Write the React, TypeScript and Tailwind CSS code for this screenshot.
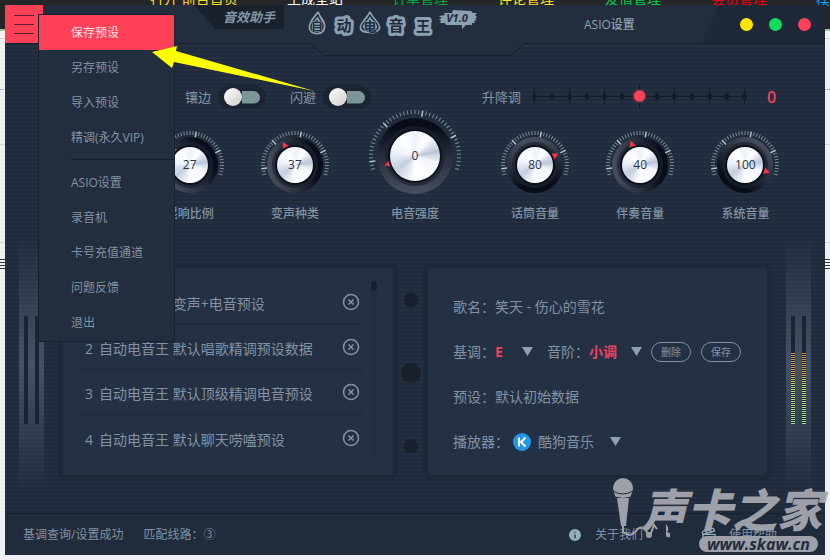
import { useState } from "react";
import { Info, Clapperboard } from "lucide-react";

const siteLinks = [
  { name: "打开 前台首页", className: "left-[150px] text-yellow-300" },
  { name: "生成全站", className: "left-[287px] text-white" },
  { name: "订单管理", className: "left-[392px] text-green-600" },
  { name: "评论管理", className: "left-[498px] text-yellow-300" },
  { name: "友情管理", className: "left-[605px] text-green-500" },
  { name: "会员管理", className: "left-[711px] text-red-600" },
  { name: "模", className: "left-[816px] text-sky-500" },
];

const fileItems = ["保存预设", "另存预设", "导入预设", "精调(永久VIP)"];
const toolItems = ["ASIO设置", "录音机", "卡号充值通道", "问题反馈", "退出"];

const knobs = [
  { label: "混响比例", value: 27 },
  { label: "变声种类", value: 37 },
  { label: "电音强度", value: 0, large: true },
  { label: "话筒音量", value: 80 },
  { label: "伴奏音量", value: 40 },
  { label: "系统音量", value: 100 },
];

const presets = [
  "自动电音王 变声+电音预设",
  "自动电音王 默认唱歌精调预设数据",
  "自动电音王 默认顶级精调电音预设",
  "自动电音王 默认聊天唠嗑预设",
];

function SiteBackground() {
  return (
    <div className="absolute inset-0 overflow-hidden">
      <div className="h-[31px] border-b-2 border-[#9dc79d] bg-[#242628]" />
      <div className="h-2 border-b border-gray-300 bg-[#f1f5ee]" />
      <nav>
        {siteLinks.map((link) => (
          <a
            key={link.name}
            href="#"
            className={`absolute -top-[9px] text-sm leading-4 whitespace-nowrap ${link.className}`}
          >
            {link.name}
          </a>
        ))}
      </nav>
      <div className="absolute top-[89px] w-full border-t border-dotted border-gray-400" />
      <div className="absolute top-[144px] w-full border-t border-gray-300" />
      <div className="absolute top-[242px] w-full border-t border-gray-300" />
      <div className="absolute top-[259px] h-[10px] w-full bg-[repeating-linear-gradient(#333_0_1px,#eef0f4_1px_3px)]" />
    </div>
  );
}

function Logo() {
  const letters = [
    { char: "自", x: 13, y: 26, size: 12 },
    { char: "动", x: 40, y: 26, size: 15 },
    { char: "电", x: 66, y: 26, size: 13 },
    { char: "音", x: 92, y: 26, size: 15 },
    { char: "王", x: 119, y: 26, size: 14 },
  ];
  return (
    <svg width="176" height="38" viewBox="0 0 176 38" className="shrink-0 font-bold">
      <g fill="#8ba0b0" stroke="#8ba0b0" strokeWidth="3" strokeLinejoin="round">
        <path d="M14 8C10 13 6 17 6 22c0 4 3 6 7 6s7-2 7-7c0-6-5-8-6-13z" />
        <path d="M66 8c-2 5-9 10-9 15 0 5 17 5 18 0 0-5-7-9-9-15z" />
      </g>
      <g fill="none" stroke="#202b3b" strokeWidth="1.5" strokeLinejoin="round">
        <path d="M14 10C10 15 7 18 7 22c0 4 3 5 6 5s6-2 6-6c0-5-5-7-5-11z" />
        <path d="M66 10c-2 5-8 8-8 12 0 5 16 5 16 0 0-4-6-7-8-12z" />
      </g>
      <g textAnchor="middle" fill="#202b3b" stroke="#8ba0b0" strokeLinejoin="round">
        {letters.map((l) => (
          <text
            key={l.char}
            x={l.x}
            y={l.y}
            fontSize={l.size}
            strokeWidth={l.size > 13 ? 6 : 1}
            paintOrder="stroke"
          >
            {l.char}
          </text>
        ))}
      </g>
      <path
        d="M135 14l3-1-3-2 6-1-1-2 8 0 1-3 18 1 2 2 4 0-2 2 2 2-2 2 2 1-3 1 1 2-3 0 0 2-6 0-4 4 0-4-16 0-1-2-5 0 1-2z"
        fill="#8ba0b0"
      />
      <text x="153" y="17" fontSize="11" textAnchor="middle" fontStyle="italic" fill="#202b3b">
        V1.0
      </text>
    </svg>
  );
}

function Header({ onMenu }: { onMenu: () => void }) {
  return (
    <header className="relative flex h-[39px] items-start border-b border-[#161f2c] bg-[#222d3e]">
      <svg
        viewBox="0 0 216 14"
        className="absolute top-[38px] left-1/2 -ml-[107px] h-[14px] w-[216px]"
      >
        <path d="M0 0h216L203 12.500H16z" fill="#222d3e" />
        <path d="M0 0.500h3L16 12.500h187L216 0.500" fill="none" stroke="#161f2c" />
      </svg>
      <button
        aria-label="菜单"
        onClick={onMenu}
        className="flex h-[38px] w-[38px] shrink-0 flex-col items-center justify-center gap-2 bg-[#ff4057]"
      >
        <span className="h-px w-5 bg-[#5a1f30]" />
        <span className="h-px w-5 bg-[#5a1f30]" />
        <span className="h-px w-5 bg-[#5a1f30]" />
      </button>
      <div className="flex flex-1 justify-end">
        <h2 className="w-[90px] bg-[#19212d] py-1 pr-[9px] text-right text-[13px] leading-4 font-bold text-[#8496a5] italic [clip-path:polygon(0_0,100%_0,100%_100%,24%_100%)]">
          音效助手
        </h2>
      </div>
      <div className="relative ml-5 flex w-[280px] shrink-0">
        <Logo />
      </div>
      <div className="flex h-full flex-1 items-center justify-between">
        <button className="pt-px text-xs font-medium text-[#8fa1b0]">ASIO设置</button>
        <div className="flex h-full items-center gap-4 bg-[#1e2838] pr-[14px] pl-[38px] [clip-path:polygon(14%_0,100%_0,100%_100%,0_100%)]">
          <button aria-label="最小化" className="h-[13px] w-[13px] rounded-full bg-[#ffe600]" />
          <button aria-label="最大化" className="h-[13px] w-[13px] rounded-full bg-[#0fdc5c]" />
          <button aria-label="关闭" className="h-[13px] w-[13px] rounded-full bg-[#ff4057]" />
        </div>
      </div>
    </header>
  );
}

function Menu() {
  return (
    <div
      role="menu"
      className="absolute top-[9px] left-[33px] z-10 w-[137px] border border-[#18212f] bg-[#222d3e] pb-px text-xs text-[#8192a0]"
    >
      {fileItems.map((item, i) => (
        <button
          key={item}
          role="menuitem"
          className={`block h-[35px] w-full pl-8 text-left ${i === 0 ? "bg-[#ff4057] text-[#ffe3e7]" : ""}`}
        >
          {item}
        </button>
      ))}
      <hr className="mt-1 mb-[5px] ml-8 border-[#121a26]" />
      {toolItems.map((item) => (
        <button key={item} role="menuitem" className="block h-[35px] w-full pl-8 text-left">
          {item}
        </button>
      ))}
    </div>
  );
}

function Toggle({ label }: { label: string }) {
  return (
    <label className="flex w-[105px] items-center gap-[7px] text-[13px]">
      {label}
      <input type="checkbox" className="peer sr-only" />
      <span className="flex h-6 w-[48px] items-center rounded-full bg-[#1b2432] pl-[6px]">
        <span className="h-[18px] w-[18px] rounded-full bg-linear-to-br from-white to-[#cfcdca]" />
        <span className="-ml-[9px] h-[13px] w-[27px] rounded-full bg-[#7b9599] [clip-path:inset(0_0_0_9px)]" />
      </span>
    </label>
  );
}

function PitchSlider() {
  const [pitch, setPitch] = useState(0);
  const marks = Array.from({ length: 13 }, (_, i) => i);
  return (
    <div className="flex items-center text-[13px]">
      <label htmlFor="pitch">升降调</label>
      <div className="relative ml-[6px] h-7 w-[226px]">
        <svg width="226" height="28" viewBox="0 0 226 28">
          <g stroke="#121a25" fill="#141c28">
            <path d="M7 13.500h211" />
            {marks.map((i) => {
              const x = 7.5 + i * 17.5;
              return (
                <g key={i}>
                  {i % 2 === 0 && <path d={i === 6 ? `M${x} 1v25` : `M${x} 5v17`} />}
                  <path d={`M${x} 10l2.500 3.500-2.500 3.500-2.500-3.500z`} />
                </g>
              );
            })}
          </g>
          <circle cx={112.5 + pitch * 17.5} cy="13" r="7" fill="#ff4057" opacity="0.3" />
          <circle cx={112.5 + pitch * 17.5} cy="13" r="5.500" fill="#ff4057" />
        </svg>
        <input
          id="pitch"
          type="range"
          min={-6}
          max={6}
          value={pitch}
          onChange={(e) => setPitch(Number(e.target.value))}
          className="absolute inset-0 w-full opacity-0"
        />
      </div>
      <output className="ml-[14px] w-3 text-base font-semibold text-[#f0405c]">{pitch}</output>
    </div>
  );
}

function Knob({ label, value, large }: { label: string; value: number; large?: boolean }) {
  const half = large ? 49 : 40;
  const body = large ? 38 : 28;
  const tick = large ? 46 : 34;
  const pointer = large ? 28 : 22;
  const face = large ? 25 : 18;
  const angle = -107 + value * 2.14;
  const count = large ? 44 : 40;
  const gradient = `ring-${label}`;
  return (
    <div className={`flex flex-col items-center ${label === "混响比例" ? "col-start-2" : ""}`}>
      <div className="relative grid place-items-center">
        <svg
          width={half * 2}
          height={half * 2}
          viewBox={`${-half} ${-half} ${half * 2} ${half * 2}`}
          className="[grid-area:1/1]"
        >
          <defs>
            <linearGradient id={gradient} x1="0" y1="0.350" x2="1" y2="0.650">
              <stop offset="0" stopColor="#4b5060" />
              <stop offset="0.500" stopColor="#272d3b" />
              <stop offset="0.850" stopColor="#080d19" />
            </linearGradient>
          </defs>
          {Array.from({ length: count + 1 }, (_, i) => {
            const major = i % (count / 4) === 2;
            return (
              <path
                key={i}
                d={`M0 ${-tick}v${major ? 6 : 4}`}
                stroke={major ? "#b4c0ca" : "#7c8997"}
                strokeWidth={major ? 1.5 : 1}
                transform={`rotate(${-107 + (214 / count) * i})`}
              />
            );
          })}
          <g transform={`rotate(${angle})`}>
            <circle r={body} fill={`url(#${gradient})`} />
            <circle r={face + 5} fill="#1c2230" opacity="0.700" />
            <path d="M0 -4L3.500 2.500H-3.500z" fill="#f0344b" transform={`translate(0 ${-pointer})`} />
          </g>
          <circle r={face + 2} fill="#0b111d" />
        </svg>
        <span
          className={`grid place-items-center rounded-full bg-[conic-gradient(#eef2fb,#fff_10%,#bcc6da_22%,#f4f6fc_30%,#fff_50%,#c4cddf_65%,#eef2fb_78%,#fff_90%,#eef2fb)] text-xs text-[#27344a] [grid-area:1/1] ${large ? "h-[50px] w-[50px]" : "h-9 w-9"}`}
        >
          {value}
        </span>
        <input
          id={label}
          type="range"
          defaultValue={value}
          className="absolute inset-0 w-full opacity-0"
        />
      </div>
      <label htmlFor={label} className="text-xs leading-[18px] font-medium">
        {label}
      </label>
    </div>
  );
}

function Meter({ lit }: { lit?: boolean }) {
  return (
    <div className="mx-auto -mt-6 h-[250px] w-[25px] bg-linear-to-b from-[#364457]/0 via-[#455366] to-[#364457]/0 pt-[77px]">
      <div className="flex justify-center gap-[7px]">
        {[0, 1].map((i) => (
          <div key={i} className="flex h-[108px] w-1 flex-col justify-end bg-[#1a2433]">
            {lit && (
              <div className="h-[72px] bg-[repeating-linear-gradient(#1a2433_0_1px,transparent_1px_2px),linear-gradient(#c98a3c,#e0994a_30%,#c9d86a_45%,#9be38c)]" />
            )}
          </div>
        ))}
      </div>
    </div>
  );
}

function PresetList() {
  return (
    <section className="flex flex-1 rounded-lg border-[5px] border-[#1d2838] bg-[#243145] pt-3 pl-4">
      <ul className="flex-1">
        {presets.map((preset, i) => (
          <li
            key={preset}
            className="flex h-[45px] items-center gap-[6px] border-b border-[#1b2535] pl-[6px] last:border-0"
          >
            <span className="pt-1">{i + 1}</span>
            <span className="flex-1 pt-1 whitespace-nowrap">{preset}</span>
            <button aria-label={`删除 ${preset}`} className="mr-[3px]">
              <svg width="18" height="18" viewBox="0 0 18 18" fill="none" stroke="#8294a4">
                <circle cx="9" cy="9" r="7.500" strokeWidth="1.500" />
                <path d="M6.500 6.500l5 5M11.500 6.500l-5 5" strokeWidth="1.500" />
              </svg>
            </button>
          </li>
        ))}
      </ul>
      <div className="mx-2 mt-px h-[174px] w-[6px] rounded-full bg-[#212d40]">
        <div className="h-[10px] rounded-full bg-[#18212f]" />
      </div>
      <div className="w-2" />
    </section>
  );
}

function Dropdown({
  id,
  value,
  className,
}: {
  id: string;
  value: string;
  className: string;
}) {
  return (
    <span className="grid items-center">
      <select id={id} className={`appearance-none bg-transparent [grid-area:1/1] ${className}`}>
        <option>{value}</option>
      </select>
      <svg
        width="11"
        height="9"
        viewBox="0 0 11 9"
        className="pointer-events-none justify-self-end [grid-area:1/1]"
      >
        <path d="M0 0h11L5.500 9z" fill="#8fa0b0" />
      </svg>
    </span>
  );
}

function SongPanel() {
  return (
    <section className="flex-1 rounded-lg border-[5px] border-[#1d2838] bg-[#243145] pt-4 pl-[25px] whitespace-nowrap">
      <p className="flex h-[45px] items-center">歌名：笑天 - 伤心的雪花</p>
      <div className="flex h-[45px] items-center">
        <label htmlFor="key">基调：</label>
        <Dropdown id="key" value="E" className="w-[38px] font-bold text-[#f0405c]" />
        <label htmlFor="scale" className="ml-[14px]">
          音阶：
        </label>
        <Dropdown id="scale" value="小调" className="w-[53px] font-bold text-[#f0405c]" />
        <button className="ml-[9px] h-5 w-10 rounded-full border border-[#8192a2] text-[10px] leading-4">
          删除
        </button>
        <button className="ml-[10px] h-5 w-10 rounded-full border border-[#8192a2] text-[10px] leading-4">
          保存
        </button>
      </div>
      <p className="flex h-[45px] items-center">预设：默认初始数据</p>
      <div className="flex h-[45px] items-center">
        <label htmlFor="player">播放器：</label>
        <svg width="18" height="18" viewBox="0 0 18 18" className="mr-[7px] ml-1">
          <circle cx="9" cy="9" r="9" fill="#2496ea" />
          <path d="M6 4.500v9M12.500 4.500L8 9l4.500 4.500" fill="none" stroke="#fff" strokeWidth="2" />
        </svg>
        <Dropdown id="player" value="酷狗音乐" className="w-[83px]" />
      </div>
    </section>
  );
}

function Watermark() {
  return (
    <div className="pointer-events-none absolute right-[3px] bottom-[3px] z-10 flex items-start text-[#a4a7af] opacity-95">
      <svg width="60" height="74" viewBox="0 0 60 74" fill="currentColor" className="-mr-7">
        <circle cx="13" cy="10" r="10" />
        <path d="M3 13q10 6 20 0l-2 6q-8 3-16 0z" stroke="#222d3e" strokeWidth="1" />
        <path d="M7 20h12l-3 28h-5z" />
        <path
          d="M13 48v6q8 6 13-1t10 0q2 4 5 2l3-8 3 4"
          fill="none"
          stroke="currentColor"
          strokeWidth="2"
        />
        <circle cx="39" cy="57" r="3" />
        <path d="M56 46q4 5 1 8 5 1 3 5-5 1-4-3z" />
      </svg>
      <div className="flex flex-col items-end pt-[9px]">
        <span className="text-[45px] leading-[45px] font-black whitespace-nowrap italic">声卡之家</span>
        <span className="mt-1 mr-1 rounded-lg bg-[#a4a7af] px-2 text-base leading-4 font-bold text-[#232e3f] italic">
          www.skaw.cn
        </span>
      </div>
    </div>
  );
}

export default function App() {
  const [menuOpen, setMenuOpen] = useState(true);

  return (
    <div className="relative min-h-screen bg-[#eef0f4] p-[5px] font-['Open_Sans','Noto_Sans_CJK_SC',sans-serif]">
      <SiteBackground />
      <main className="relative bg-[#222e3f] bg-[repeating-linear-gradient(#243041_0_2px,#1f2a3a_2px_4px)] text-sm text-[#8192a2]">
        <Header onMenu={() => setMenuOpen(!menuOpen)} />
        {menuOpen && <Menu />}

        <div className="flex h-7 items-center justify-between pr-[46px] pl-[180px] mt-[39px]">
          <div className="flex">
            <Toggle label="镶边" />
            <Toggle label="闪避" />
          </div>
          <PitchSlider />
        </div>

        <div className="-mt-1 grid grid-cols-[1fr_1fr_1fr_135px_1fr_1fr_1fr] items-end px-[27px]">
          {knobs.map((knob) => (
            <Knob key={knob.label} {...knob} />
          ))}
        </div>

        <div className="mt-10 flex h-[217px]">
          <div className="w-[53px]">
            <Meter />
          </div>
          <PresetList />
          <div className="flex w-[25px] flex-col items-center justify-between pt-[30px] pb-[27px]">
            <span className="h-[14px] w-[14px] rounded-full bg-[#17202b]" />
            <span className="h-5 w-5 rounded-full bg-[#17202b]" />
            <span className="h-[14px] w-[14px] rounded-full bg-[#17202b]" />
          </div>
          <SongPanel />
          <div className="w-[53px]">
            <Meter lit />
          </div>
        </div>

        <footer className="mt-[33px] flex h-[42px] items-center border-t border-[#182130] bg-[#202b3c] pr-12 pl-[18px] text-xs">
          <span>基调查询/设置成功</span>
          <span className="ml-5 flex-1">匹配线路：③</span>
          <a href="#" className="flex items-center gap-3">
            <Info size={16} fill="#8fb0b5" stroke="#202b3c" />
            关于我们
          </a>
          <a href="#" className="ml-[58px] flex items-center gap-3">
            <Clapperboard size={16} stroke="#8fb0b5" />
            使用帮助
          </a>
        </footer>
        <Watermark />

        <svg
          width="164"
          height="47"
          viewBox="0 0 164 47"
          className="pointer-events-none absolute top-10 left-[146px] z-20"
        >
          <path d="M1 7L26 1L25 6L163 46L23 17L21 23z" fill="#ffff00" />
        </svg>
      </main>
    </div>
  );
}
